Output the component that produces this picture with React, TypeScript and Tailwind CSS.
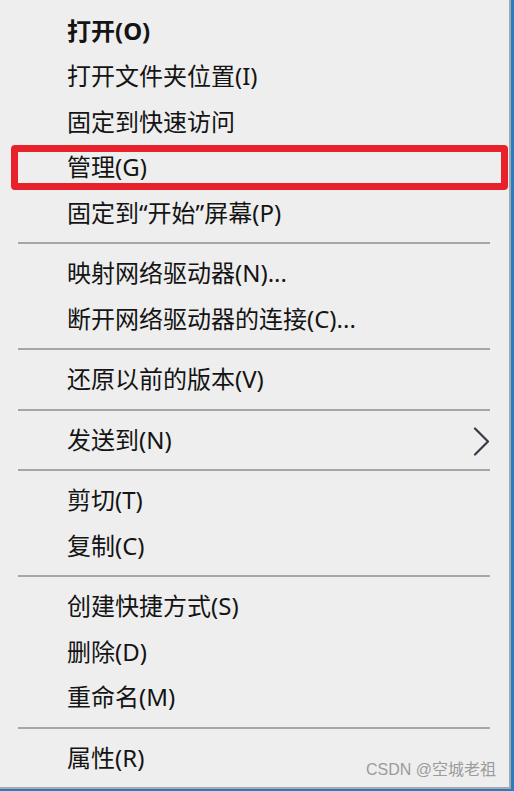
import React from "react";

type Entry = { t: string; bold?: boolean; sub?: boolean; boxed?: boolean } | "sep";

const entries: Entry[] = [
  { t: "打开(O)", bold: true },
  { t: "打开文件夹位置(I)" },
  { t: "固定到快速访问" },
  { t: "管理(G)", boxed: true },
  { t: "固定到“开始”屏幕(P)" },
  "sep",
  { t: "映射网络驱动器(N)..." },
  { t: "断开网络驱动器的连接(C)..." },
  "sep",
  { t: "还原以前的版本(V)" },
  "sep",
  { t: "发送到(N)", sub: true },
  "sep",
  { t: "剪切(T)" },
  { t: "复制(C)" },
  "sep",
  { t: "创建快捷方式(S)" },
  { t: "删除(D)" },
  { t: "重命名(M)" },
  "sep",
  { t: "属性(R)" },
];

export default function App() {
  return (
    <div
      className="w-[514px] h-[791px] bg-[#2a7cc2] pr-[3px] pb-[2px]"
      style={{ fontFamily: '"Noto Sans", "Noto Sans CJK SC", sans-serif' }}
    >
      <div className="relative w-full h-full bg-[#eeeeee] border-r-2 border-b-2 border-[#a9a9a9] pt-[8px]">
        {entries.map((e, i) =>
          e === "sep" ? (
            <div key={i} className="h-[15px] flex items-center pl-[18px] pr-[19px]">
              <div className="h-[2px] w-full bg-[#a6a6a6]" />
            </div>
          ) : (
            <div
              key={i}
              className={`relative h-[45.5px] flex items-center pl-[67px] text-[24px] leading-none text-[#141414] ${
                e.bold ? "font-bold" : "font-normal"
              }`}
            >
              <span>{e.t}</span>
              {e.sub && (
                <svg
                  className="absolute right-[19px] top-[10px]"
                  width="17"
                  height="29"
                  viewBox="0 0 17 29"
                >
                  <polyline
                    points="2,1.5 15,14.5 2,27.5"
                    fill="none"
                    stroke="#3a3a4a"
                    strokeWidth="2.2"
                    strokeLinecap="round"
                    strokeLinejoin="round"
                  />
                </svg>
              )}
              {e.boxed && (
                <div className="absolute left-[11px] right-[1px] top-0 bottom-0 border-[7px] border-[#e8222b] rounded-[4px]" />
              )}
            </div>
          )
        )}
        <div
          className="absolute right-[13px] bottom-[9px] text-[16px] leading-none text-[#9b9b9b]"
          style={{ fontFamily: '"Liberation Sans", "Noto Sans CJK SC", sans-serif' }}
        >
          CSDN @空城老祖
        </div>
      </div>
    </div>
  );
}
